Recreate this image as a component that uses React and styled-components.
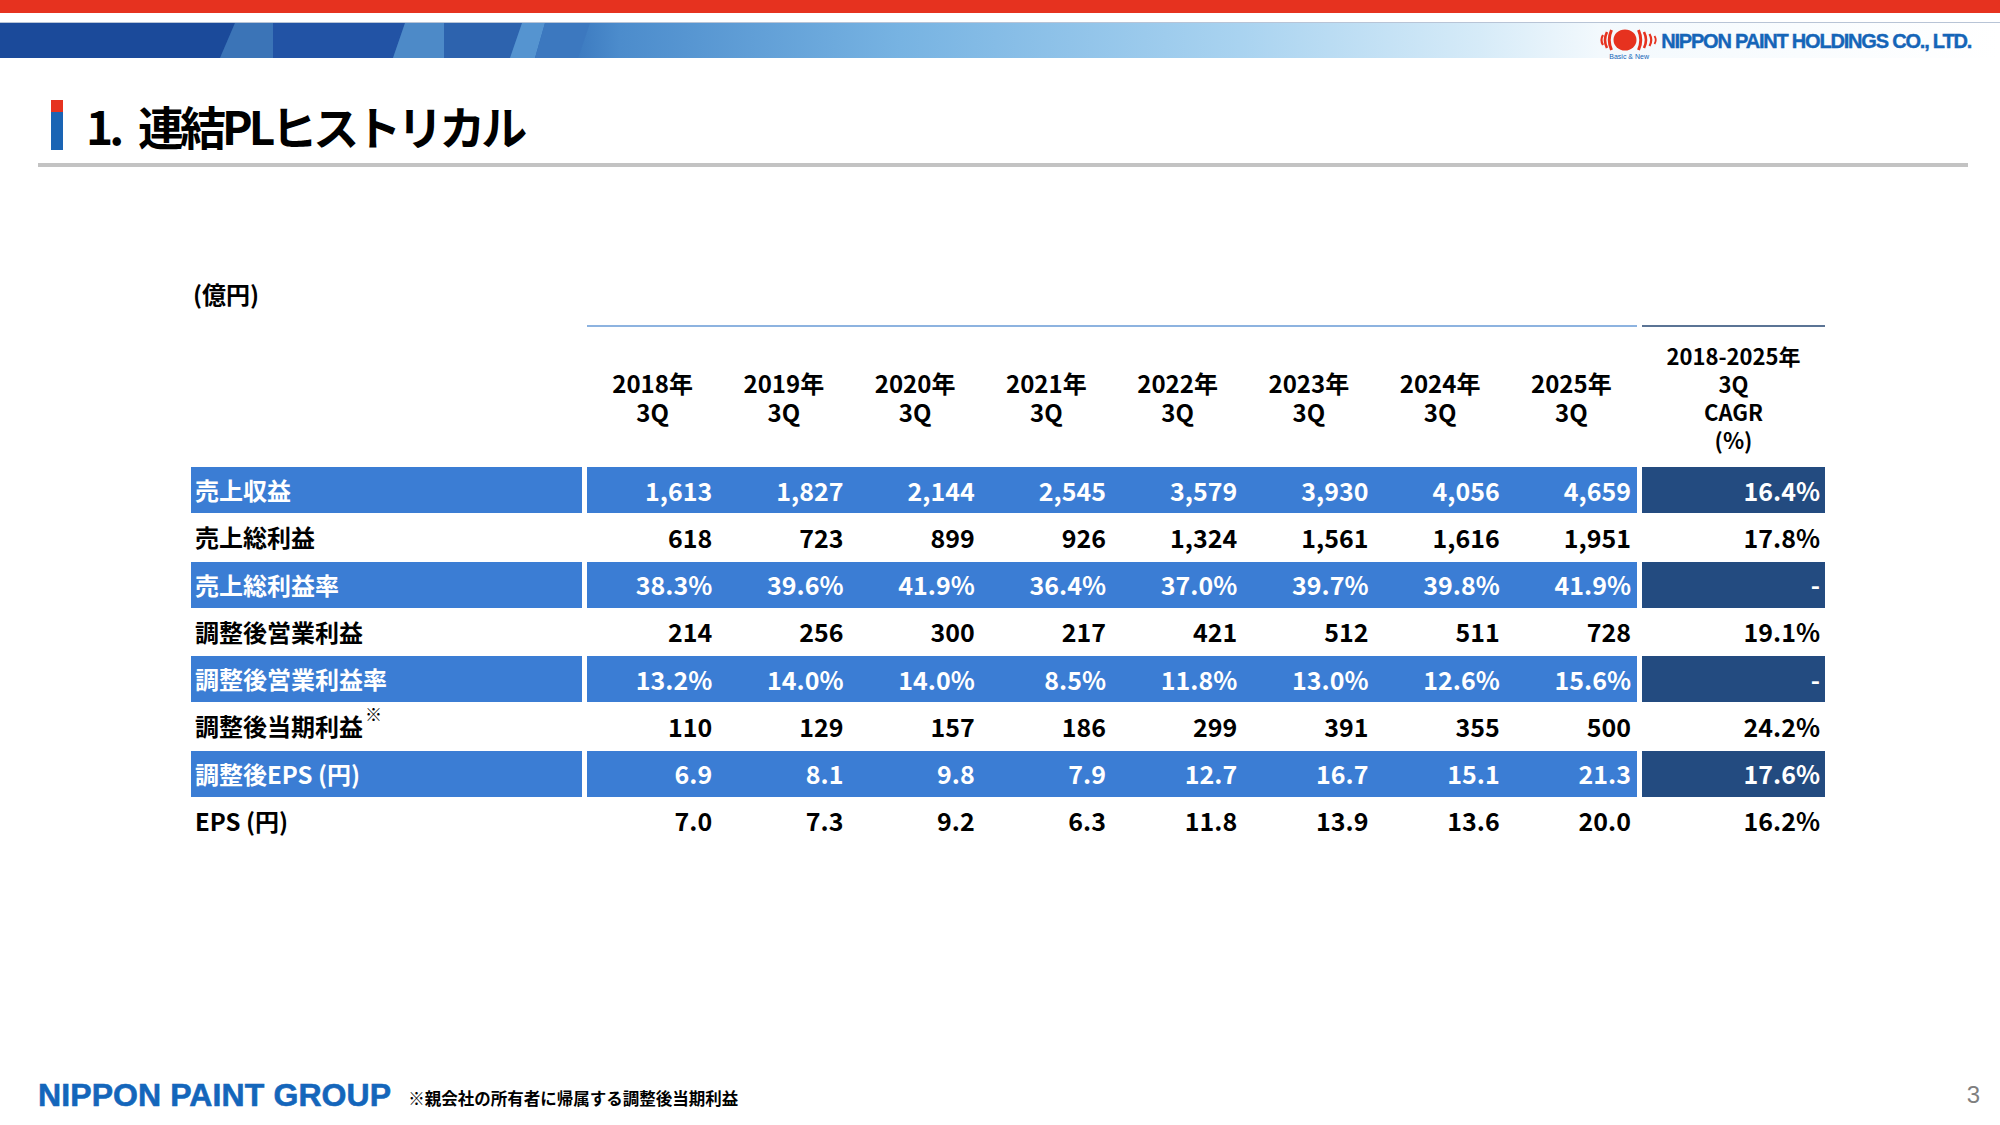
import React from 'react';
import styled, { createGlobalStyle } from 'styled-components';

const colors = {
  red: '#e6321f',
  navy: '#1a4899',
  rowBlue: '#3b7dd4',
  cagrBlue: '#234b80',
  brand: '#1565b8',
  rule: '#c3c3c3',
};

const years = ['2018', '2019', '2020', '2021', '2022', '2023', '2024', '2025'];

const rows = [
  { label: '売上収益', tone: 'blue', values: ['1,613', '1,827', '2,144', '2,545', '3,579', '3,930', '4,056', '4,659'], cagr: '16.4%' },
  { label: '売上総利益', values: ['618', '723', '899', '926', '1,324', '1,561', '1,616', '1,951'], cagr: '17.8%' },
  { label: '売上総利益率', tone: 'blue', values: ['38.3%', '39.6%', '41.9%', '36.4%', '37.0%', '39.7%', '39.8%', '41.9%'], cagr: '-' },
  { label: '調整後営業利益', values: ['214', '256', '300', '217', '421', '512', '511', '728'], cagr: '19.1%' },
  { label: '調整後営業利益率', tone: 'blue', values: ['13.2%', '14.0%', '14.0%', '8.5%', '11.8%', '13.0%', '12.6%', '15.6%'], cagr: '-' },
  { label: '調整後当期利益', note: true, values: ['110', '129', '157', '186', '299', '391', '355', '500'], cagr: '24.2%' },
  { label: '調整後EPS (円)', tone: 'blue', values: ['6.9', '8.1', '9.8', '7.9', '12.7', '16.7', '15.1', '21.3'], cagr: '17.6%' },
  { label: 'EPS (円)', values: ['7.0', '7.3', '9.2', '6.3', '11.8', '13.9', '13.6', '20.0'], cagr: '16.2%' },
];

export default function App() {
  return (
    <Page>
      <GlobalStyle />
      <RedBar />
      <Band>
        <svg className="deco" viewBox="0 0 2000 35" preserveAspectRatio="none">
          <defs>
            <linearGradient id="bandFade" x1="0" x2="2000" y1="0" y2="0" gradientUnits="userSpaceOnUse">
              <stop offset="0" stopColor="#1a4899" />
              <stop offset="0.27" stopColor="#2f6cb6" />
              <stop offset="0.31" stopColor="#4c8ccc" />
              <stop offset="0.45" stopColor="#77b3e2" />
              <stop offset="0.62" stopColor="#a9d3f0" />
              <stop offset="0.74" stopColor="#d6ebf8" />
              <stop offset="0.8" stopColor="#f3f9fd" />
              <stop offset="1" stopColor="#ffffff" />
            </linearGradient>
          </defs>
          <rect x="0" y="0" width="2000" height="35" fill="url(#bandFade)" />
          <polygon points="0,0 235,0 220,35 0,35" fill="#1b4a9a" />
          <polygon points="235,0 273,0 273,35 220,35" fill="#3b74b7" />
          <polygon points="273,0 405,0 393,35 273,35" fill="#2253a5" />
          <polygon points="405,0 444,0 444,35 393,35" fill="#4d8ac8" />
          <polygon points="444,0 522,0 510,35 444,35" fill="#2d63ae" />
          <polygon points="522,0 545,0 535,35 510,35" fill="#5594d0" />
          <polygon points="545,0 590,0 578,35 535,35" fill="#3c78bf" />
        </svg>
        <Logo>
          <LogoMark>
            <svg width="58" height="26" viewBox="0 0 58 26">
              <path d="M3 8 Q0 13 3 18" stroke={colors.red} strokeWidth="2.2" fill="none" />
              <path d="M7 5 Q3 13 7 21" stroke={colors.red} strokeWidth="2.6" fill="none" />
              <path d="M11.5 3 Q7 13 11.5 23" stroke={colors.red} strokeWidth="3" fill="none" />
              <ellipse cx="25" cy="13" rx="11.5" ry="10.5" fill={colors.red} />
              <path d="M38.5 3 Q43 13 38.5 23" stroke={colors.red} strokeWidth="3" fill="none" />
              <path d="M44 5 Q48 13 44 21" stroke={colors.red} strokeWidth="2.6" fill="none" />
              <path d="M49.5 7 Q53 13 49.5 19" stroke={colors.red} strokeWidth="2.2" fill="none" />
              <path d="M54.5 9 Q57 13 54.5 17" stroke={colors.red} strokeWidth="1.8" fill="none" />
            </svg>
            <Tagline>Basic &amp; New</Tagline>
          </LogoMark>
          <Company>NIPPON PAINT HOLDINGS CO., LTD.</Company>
        </Logo>
      </Band>

      <TitleRow>
        <Accent />
        <Title>
          <Num>1.</Num>連結PLヒストリカル
        </Title>
      </TitleRow>
      <Rule />

      <Content>
        <Unit>(億円)</Unit>
        <Table>
          <HeadRow>
            <div />
            <HeadGroup>
              {years.map((y) => (
                <HeadCell key={y}>
                  {y}年
                  <br />
                  3Q
                </HeadCell>
              ))}
            </HeadGroup>
            <CagrHead>
              2018-2025年
              <br />
              3Q
              <br />
              CAGR
              <br />
              (%)
            </CagrHead>
          </HeadRow>
          {rows.map((r) => (
            <Row key={r.label}>
              <Label $tone={r.tone}>
                {r.label}
                {r.note && <Mark>※</Mark>}
              </Label>
              <ValueGroup $tone={r.tone}>
                {r.values.map((v, i) => (
                  <Value key={i}>{v}</Value>
                ))}
              </ValueGroup>
              <Cagr $tone={r.tone}>{r.cagr}</Cagr>
            </Row>
          ))}
        </Table>
      </Content>

      <Footer>
        <Group>NIPPON PAINT GROUP</Group>
        <Footnote>※親会社の所有者に帰属する調整後当期利益</Footnote>
        <PageNo>3</PageNo>
      </Footer>
    </Page>
  );
}

const GlobalStyle = createGlobalStyle`
  html, body { margin:0; padding:0; background:#fff; }
  body { font-family: 'Noto Sans CJK JP', 'Liberation Sans', sans-serif; color:#000; }
`;

const Page = styled.div`
  width:2000px;
  height:1125px;
  display:flex;
  flex-direction:column;
  overflow:hidden;
  background:#fff;
`;

const RedBar = styled.div`
  flex:none;
  height:13px;
  background:${colors.red};
`;

const Band = styled.div`
  flex:none;
  position:relative;
  margin-top:9px;
  height:35px;
  border-top:1px solid #b8c4d6;
  display:flex;
  align-items:center;
  justify-content:flex-end;
  padding-right:29px;
  > svg.deco {
    position:absolute;
    inset:0;
    width:100%;
    height:100%;
  }
`;

const Logo = styled.div`
  position:relative;
  display:flex;
  align-items:center;
  gap:3px;
`;

const LogoMark = styled.div`
  display:flex;
  flex-direction:column;
  align-items:center;
  margin-top:6px;
  svg { display:block; }
`;

const Tagline = styled.span`
  font: 400 7px/8px 'Liberation Sans', sans-serif;
  color:${colors.brand};
`;

const Company = styled.span`
  font: 700 20px/1 'Liberation Sans', Arial, sans-serif;
  letter-spacing:-1.2px;
  color:${colors.brand};
  -webkit-text-stroke:0.4px ${colors.brand};
`;

const TitleRow = styled.div`
  flex:none;
  display:flex;
  align-items:center;
  gap:23px;
  height:50px;
  margin:42px 0 0 51px;
`;

const Accent = styled.div`
  width:12px;
  height:50px;
  background:linear-gradient(${colors.red} 0 12px, #1a64b4 12px);
`;

const Title = styled.h1`
  margin:0;
  font: 700 46px/1 'Noto Sans CJK JP', sans-serif;
  letter-spacing:-4px;
  color:#000;
`;

const Num = styled.span`
  margin-right:18px;
`;

const Rule = styled.div`
  flex:none;
  height:4px;
  margin:13px 32px 0 38px;
  background:${colors.rule};
`;

const Content = styled.div`
  margin:111px 0 0 191px;
  width:1634px;
`;

const Unit = styled.div`
  font: 700 24px/32px 'Noto Sans CJK JP', sans-serif;
  margin:0 0 15px 2px;
`;

const Table = styled.div`
  display:flex;
  flex-direction:column;
`;

const grid = `
  display:grid;
  grid-template-columns:391px 1050px 183px;
  column-gap:5px;
`;

const HeadRow = styled.div`
  ${grid}
  height:142px;
`;

const HeadGroup = styled.div`
  display:grid;
  grid-template-columns:repeat(8, 1fr);
  border-top:2px solid #8db3e0;
`;

const HeadCell = styled.div`
  display:flex;
  align-items:center;
  justify-content:center;
  text-align:center;
  font: 700 24px/29px 'Noto Sans CJK JP', sans-serif;
`;

const CagrHead = styled(HeadCell)`
  border-top:2px solid #5b7495;
  font-size:22px;
  line-height:28px;
`;

const Row = styled.div`
  ${grid}
  height:47.25px;
  padding-bottom:1px;
  box-sizing:border-box;
`;

const toneBg = (p, blue) => (p.$tone === 'blue' ? blue : '#fff');
const toneFg = (p) => (p.$tone === 'blue' ? '#fff' : '#000');

const Label = styled.div`
  display:flex;
  align-items:center;
  padding-left:4px;
  background:${(p) => toneBg(p, colors.rowBlue)};
  color:${toneFg};
  font: 700 24px/1 'Noto Sans CJK JP', sans-serif;
`;

const Mark = styled.span`
  font-size:17px;
  align-self:flex-start;
  margin-top:2px;
  margin-left:2px;
`;

const ValueGroup = styled.div`
  display:grid;
  grid-template-columns:repeat(8, 1fr);
  background:${(p) => toneBg(p, colors.rowBlue)};
  color:${toneFg};
`;

const Value = styled.div`
  display:flex;
  align-items:center;
  justify-content:flex-end;
  padding-right:6px;
  font: 700 25px/1 'Noto Sans CJK JP', sans-serif;
`;

const Cagr = styled(Value)`
  padding-right:5px;
  background:${(p) => toneBg(p, colors.cagrBlue)};
  color:${toneFg};
`;

const Footer = styled.div`
  margin-top:auto;
  display:flex;
  align-items:center;
  height:40px;
  padding:0 20px 10px 38px;
`;

const Group = styled.div`
  font: 700 32px/1 'Liberation Sans', Arial, sans-serif;
  letter-spacing:0.1px;
  color:#1466bb;
  -webkit-text-stroke:0.6px #1466bb;
`;

const Footnote = styled.div`
  margin-left:17px;
  margin-top:6px;
  font: 700 16.5px/1 'Noto Sans CJK JP', sans-serif;
`;

const PageNo = styled.div`
  margin-left:auto;
  font: 400 24px/1 'Liberation Sans', Arial, sans-serif;
  color:#7f7f7f;
`;
